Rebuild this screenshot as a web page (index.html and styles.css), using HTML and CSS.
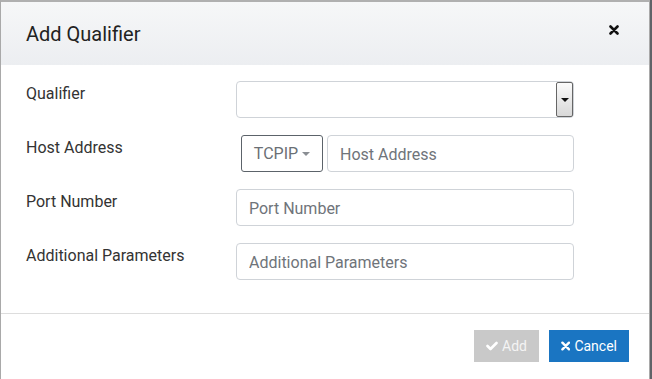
FILE: index.html
```html
<!DOCTYPE html>
<html lang="en">
  <head>
    <meta charset="UTF-8" />
    <title>Add Qualifier</title>
    <link rel="stylesheet" href="styles.css">
  </head>
  <body>
    <div class="modal">
      <header class="modal-header">
        <h4>Add Qualifier</h4>
        <span class="close">
          <svg width="10" height="10" viewBox="0 0 10 10"><path d="M1.5 1.5 L8.5 8.5 M8.5 1.5 L1.5 8.5" stroke="#111" stroke-width="2.6" stroke-linecap="round"/></svg>
        </span>
      </header>

      <div class="modal-body">
        <label>Qualifier</label>
        <div class="select">
          <span class="select-btn"><i class="caret dark"></i></span>
        </div>

        <label>Host Address</label>
        <div class="group">
          <button class="proto">TCPIP <i class="caret"></i></button>
          <input type="text" placeholder="Host Address" />
        </div>

        <label>Port Number</label>
        <input type="text" placeholder="Port Number" />

        <label>Additional Parameters</label>
        <input type="text" placeholder="Additional Parameters" />
      </div>

      <footer class="modal-footer">
        <button class="btn btn-add">
          <svg width="12" height="10" viewBox="0 0 12 10"><path d="M1.5 5 L4.5 8 L10.5 2" stroke="#fff" stroke-width="2.6" fill="none" stroke-linecap="round" stroke-linejoin="round"/></svg>
          Add
        </button>
        <button class="btn btn-cancel">
          <svg width="10" height="10" viewBox="0 0 10 10"><path d="M1.5 1.5 L8.5 8.5 M8.5 1.5 L1.5 8.5" stroke="#fff" stroke-width="2.6" stroke-linecap="round"/></svg>
          Cancel
        </button>
      </footer>
    </div>
  </body>
</html>
```

FILE: styles.css
```css
body {
  margin: 0;
  background-color: #5f6368;
  font-family: Roboto, "Liberation Sans", sans-serif;
  color: #333;
  height: 379px;
  overflow: hidden;
}

.modal {
  width: 648px;
  height: 400px;
  background-color: #fff;
  border: 1px solid #a9a9a9;
  border-top: 2px solid #b0b0b0;
}

.modal-header {
  height: 63px;
  padding: 0 25px;
  display: flex;
  align-items: center;
  justify-content: space-between;
  background: linear-gradient(#f6f7f8, #eceef1);
}

.modal-header h4 {
  margin: 0;
  font-size: 20px;
  font-weight: 400;
  color: #222;
}

.close {
  display: flex;
  margin-right: 5px;
  margin-top: -8px;
}

.modal-body {
  display: grid;
  grid-template-columns: 210px 338px;
  row-gap: 17px;
  padding: 16px 25px 33px;
  border-bottom: 1px solid #ddd;
}

.modal-body label {
  font-size: 16px;
  padding-top: 3px;
  line-height: 20px;
}

input,
.select {
  box-sizing: border-box;
  height: 37px;
  border: 1px solid #cfd3d8;
  border-radius: 4px;
  font-family: inherit;
  font-size: 16px;
  padding: 1px 12px 0;
  color: #333;
  width: 100%;
}

input::placeholder {
  color: #6f747a;
}

.select {
  display: flex;
  justify-content: flex-end;
  align-items: stretch;
  padding: 0;
}

.select-btn {
  width: 15px;
  border: 1px solid #666;
  border-radius: 2px;
  background: linear-gradient(#fbfbfb, #d8d8d8);
  display: flex;
  align-items: center;
  justify-content: center;
}

.group {
  display: flex;
  gap: 4px;
  padding-left: 5px;
}

.proto {
  box-sizing: border-box;
  width: 82px;
  height: 37px;
  flex-shrink: 0;
  background: #fff;
  border: 1px solid #5c636a;
  border-radius: 3px;
  font-family: inherit;
  font-size: 16px;
  color: #6a6f75;
  display: flex;
  align-items: center;
  justify-content: center;
  gap: 4px;
  padding: 0;
}

.caret {
  display: inline-block;
  border-top: 4px solid #8a8e93;
  border-left: 4px solid transparent;
  border-right: 4px solid transparent;
}

.caret.dark {
  border-top-color: #111;
}

.modal-footer {
  display: flex;
  justify-content: flex-end;
  gap: 10px;
  padding: 16px 20px;
}

.btn {
  height: 32px;
  border: none;
  border-radius: 0;
  color: #fff;
  font-family: inherit;
  font-size: 14px;
  display: flex;
  align-items: center;
  gap: 4px;
  padding: 0 12px;
}

.btn-add {
  width: 65px;
  background-color: #c9c9c9;
  color: #f4f4f4;
}

.btn-cancel {
  width: 80px;
  background-color: #1a75c2;
}
```
